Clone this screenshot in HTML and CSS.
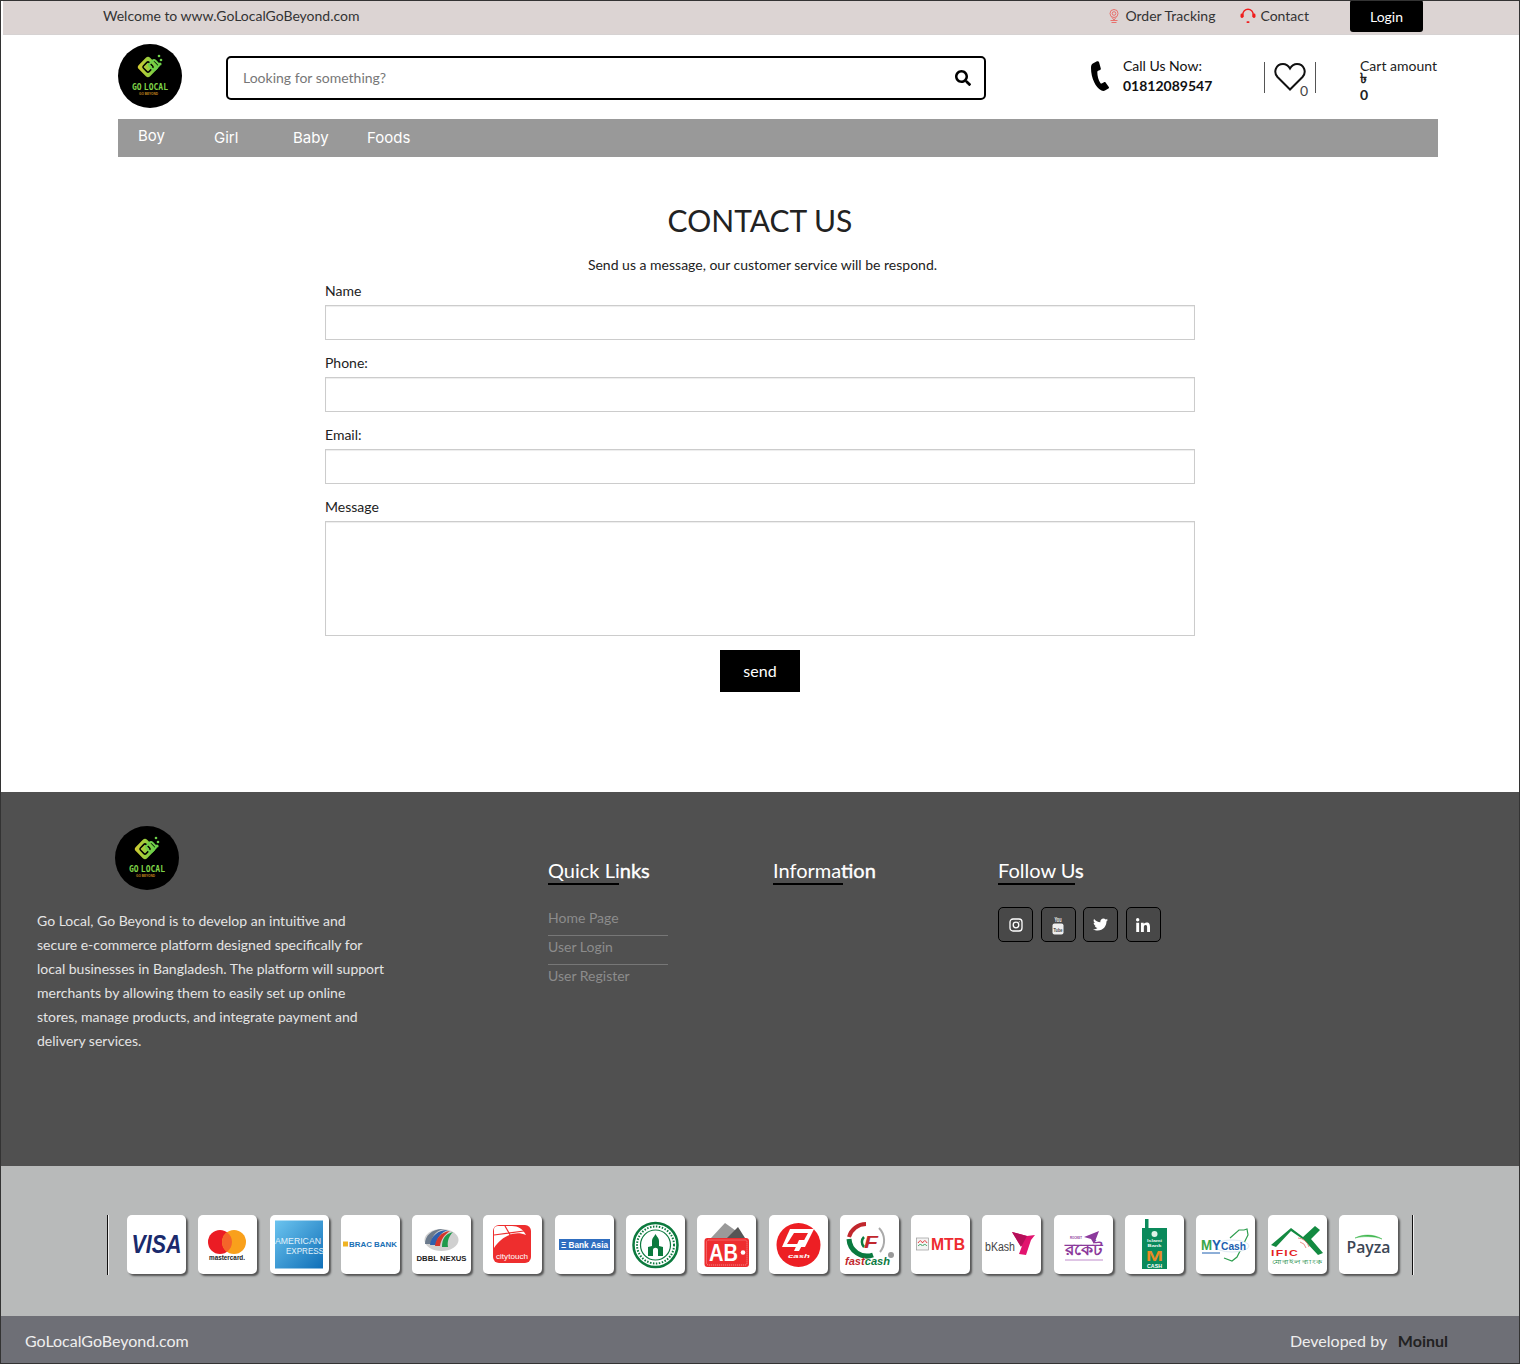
FILE: index.html
```html
<!DOCTYPE html>
<html lang="en">

<head>
    <meta charset="UTF-8">
    <meta name="viewport" content="width=device-width, initial-scale=1.0">
    <title>Contact Us</title>
    <link rel="stylesheet" href="styles.css">
</head>

<body>
    <!-- top bar -->
    <div class="topbar">
        <span class="welcome">Welcome to www.GoLocalGoBeyond.com</span>
        <a class="top-link track" href="#">
            <svg width="10" height="14" viewBox="0 0 10 14" fill="none" stroke="#e8706c" stroke-width="1">
                <circle cx="5" cy="4.500" r="4" />
                <circle cx="5" cy="4.500" r="1.800" />
                <path d="M3 8.500 5 11l2-2.500M1.500 11.500h7M2.500 13.500h5" />
            </svg>
            Order Tracking
        </a>
        <a class="top-link contact" href="#">
            <svg width="16" height="16" viewBox="0 0 16 16" fill="none">
                <path d="M2.800 9V6.500a5.200 5.200 0 0 1 10.400 0V9" stroke="#f01c1c" stroke-width="1.400" />
                <rect x="0.500" y="5.500" width="3" height="4.500" rx="1.400" fill="#f01c1c" />
                <rect x="12.500" y="5.500" width="3" height="4.500" rx="1.400" fill="#f01c1c" />
                <rect x="6.500" y="13.200" width="3" height="1.800" rx="0.800" fill="#f01c1c" />
            </svg>
            Contact
        </a>
        <a class="login" href="#">Login</a>
    </div>

    <!-- header -->
    <header class="header">
        <svg class="logo" width="64" height="64" viewBox="0 0 64 64">
            <defs>
                <linearGradient id="logoGrad" x1="0" y1="1" x2="1" y2="0">
                    <stop offset="0" stop-color="#d8c92f" />
                    <stop offset="1" stop-color="#5fd04a" />
                </linearGradient>
            </defs>
            <circle cx="32" cy="32" r="32" fill="#000" />
            <rect x="22" y="15" width="16" height="16" rx="3" transform="rotate(45 30 23)" fill="url(#logoGrad)" />
            <rect x="26" y="19" width="8" height="8" rx="1.500" transform="rotate(45 30 23)" fill="none" stroke="#000" stroke-width="1.500" />
            <rect x="32" y="17" width="8" height="8" rx="2" transform="rotate(45 36 21)" fill="none" stroke="#6ed04a" stroke-width="2" />
            <circle cx="42" cy="20" r="1.600" fill="#6ed04a" />
            <circle cx="43" cy="16" r="1.300" fill="#6ed04a" />
            <circle cx="41" cy="12" r="1.300" fill="#6ed04a" />
            <text x="14" y="46" class="logo-name" textLength="36" lengthAdjust="spacingAndGlyphs">GO LOCAL</text>
            <text x="21" y="50.500" class="logo-sub" textLength="19" lengthAdjust="spacingAndGlyphs">GO BEYOND</text>
        </svg>
        <div class="search">
            <input type="text" placeholder="Looking for something?">
            <svg width="16" height="16" viewBox="0 0 512 512" fill="#000">
                <path d="M505 442.700L405.300 343c-4.500-4.500-10.600-7-17-7H372c27.600-35.300 44-79.700 44-128C416 93.100 322.900 0 208 0S0 93.100 0 208s93.100 208 208 208c48.300 0 92.700-16.400 128-44v16.300c0 6.400 2.500 12.500 7 17l99.700 99.700c9.400 9.400 24.600 9.400 33.900 0l28.300-28.300c9.400-9.400 9.400-24.600.1-34zM208 336c-70.700 0-128-57.200-128-128 0-70.700 57.200-128 128-128 70.700 0 128 57.200 128 128 0 70.700-57.200 128-128 128z" />
            </svg>
        </div>
        <svg class="phone" width="18" height="30" viewBox="0 0 18 30" fill="#000">
            <path d="M5.500.500 1.800 2.600C.4 3.500 0 5 0 7c0 5 1.200 10 3.200 14.200 1.500 3.200 4 6.800 7.300 8.300 1.300.6 2.700.5 3.900-.2l3-1.800c.6-.4.800-1 .4-1.600l-3.200-4.400c-.4-.5-1-.6-1.600-.3l-2.300 1.200c-.5.200-1 .1-1.300-.4C7.500 19.500 6.300 15 6.300 11c0-.6.300-1 .8-1.200l2-.9c.6-.3.800-.8.700-1.400L8 1.100C7.800.3 6.300 0 5.500.5z" />
        </svg>
        <div class="call">
            <span>Call Us Now:</span>
            <b>01812089547</b>
        </div>
        <div class="wish">
            <svg width="32" height="30" viewBox="0 0 32 30" fill="none" stroke="#111" stroke-width="2">
                <path d="M16 27.500 3.500 15C-1 10 2 2 9 2c3.500 0 5.500 2 7 4.500C17.500 4 19.500 2 23 2c7 0 10 8 5.500 13z" />
            </svg>
            <span class="wish-count">0</span>
        </div>
        <div class="cart">
            <span>Cart amount</span>
            <span class="taka">৳</span>
            <b>0</b>
        </div>
    </header>

    <nav class="nav">
        <a class="boy" href="#">Boy</a>
        <a href="#">Girl</a>
        <a href="#">Baby</a>
        <a href="#">Foods</a>
    </nav>

    <!-- contact form -->
    <main class="main">
        <h1>CONTACT US</h1>
        <p class="lead">Send us a message, our customer service will be respond.</p>
        <form class="form">
            <label>Name</label>
            <input type="text">
            <label>Phone:</label>
            <input type="text">
            <label>Email:</label>
            <input type="text">
            <label>Message</label>
            <textarea></textarea>
            <button type="button">send</button>
        </form>
    </main>

    <!-- footer -->
    <footer class="footer">
        <div class="about">
            <svg class="foot-logo" width="64" height="64" viewBox="0 0 64 64">
                <circle cx="32" cy="32" r="32" fill="#000" />
                <rect x="22" y="15" width="16" height="16" rx="3" transform="rotate(45 30 23)" fill="url(#logoGrad)" />
                <rect x="26" y="19" width="8" height="8" rx="1.500" transform="rotate(45 30 23)" fill="none" stroke="#000" stroke-width="1.500" />
                <rect x="32" y="17" width="8" height="8" rx="2" transform="rotate(45 36 21)" fill="none" stroke="#6ed04a" stroke-width="2" />
                <circle cx="42" cy="20" r="1.600" fill="#6ed04a" />
                <circle cx="43" cy="16" r="1.300" fill="#6ed04a" />
                <circle cx="41" cy="12" r="1.300" fill="#6ed04a" />
                <text x="14" y="46" class="logo-name" textLength="36" lengthAdjust="spacingAndGlyphs">GO LOCAL</text>
                <text x="21" y="50.500" class="logo-sub" textLength="19" lengthAdjust="spacingAndGlyphs">GO BEYOND</text>
            </svg>
            <p>Go Local, Go Beyond is to develop an intuitive and secure e-commerce platform designed specifically for local businesses in Bangladesh. The platform will support merchants by allowing them to easily set up online stores, manage products, and integrate payment and delivery services.</p>
        </div>
        <div class="foot-col">
            <h4 class="u-quick">Quick Li<span>nks</span></h4>
            <ul>
                <li><a href="#">Home Page</a></li>
                <li><a href="#">User Login</a></li>
                <li><a href="#">User Register</a></li>
            </ul>
        </div>
        <div class="foot-col">
            <h4 class="u-info">Informa<span>tion</span></h4>
        </div>
        <div class="foot-col">
            <h4 class="u-follow">Follow U<span>s</span></h4>
            <div class="social">
                <a href="#">
                    <svg width="14" height="14" viewBox="0 0 14 14" fill="none" stroke="#fff" stroke-width="1.300">
                        <rect x="1" y="1" width="12" height="12" rx="3" />
                        <circle cx="7" cy="7" r="2.800" />
                        <circle cx="10.300" cy="3.700" r="0.500" fill="#fff" stroke="none" />
                    </svg>
                </a>
                <a href="#">
                    <svg class="yt" width="14" height="20" viewBox="0 0 14 20">
                        <text x="7" y="7" class="yt-you" textLength="7" lengthAdjust="spacingAndGlyphs">You</text>
                        <rect x="1.500" y="8.500" width="11" height="11" rx="2" fill="#eee" />
                        <text x="7" y="17" class="yt-tube" textLength="9" lengthAdjust="spacingAndGlyphs">Tube</text>
                    </svg>
                </a>
                <a href="#">
                    <svg width="15" height="15" viewBox="0 0 512 512" fill="#fff">
                        <path d="M459.370 151.716c.325 4.548.325 9.097.325 13.645 0 138.720-105.583 298.558-298.558 298.558-59.452 0-114.680-17.219-161.137-47.106 8.447.974 16.568 1.299 25.340 1.299 49.055 0 94.213-16.568 130.274-44.832-46.132-.975-84.792-31.188-98.112-72.772 6.498.974 12.995 1.624 19.818 1.624 9.421 0 18.843-1.300 27.614-3.573-48.081-9.747-84.143-51.980-84.143-102.985v-1.299c13.969 7.797 30.214 12.670 47.431 13.319-28.264-18.843-46.781-51.005-46.781-87.391 0-19.492 5.197-37.360 14.294-52.954 51.655 63.675 129.300 105.258 216.365 109.807-1.624-7.797-2.599-15.918-2.599-24.040 0-57.828 46.782-104.934 104.934-104.934 30.213 0 57.502 12.670 76.670 33.137 23.715-4.548 46.456-13.320 66.599-25.340-7.798 24.366-24.366 44.833-46.132 57.827 21.117-2.273 41.584-8.122 60.426-16.243-14.292 20.791-32.161 39.308-52.628 54.253z" />
                    </svg>
                </a>
                <a href="#">
                    <svg width="14" height="14" viewBox="0 0 448 448" fill="#fff">
                        <path d="M100.280 448H7.400V148.900h92.880zM53.790 108.100C24.090 108.100 0 83.500 0 53.800a53.790 53.790 0 0 1 107.580 0c0 29.700-24.100 54.300-53.790 54.300zM447.900 448h-92.680V302.400c0-34.700-.7-79.200-48.290-79.200-48.290 0-55.690 37.700-55.690 76.700V448h-92.780V148.900h89.080v40.800h1.300c12.400-23.500 42.690-48.300 87.880-48.300 94 0 111.280 61.900 111.280 142.300V448z" />
                    </svg>
                </a>
            </div>
        </div>
    </footer>

    <!-- payment methods -->
    <section class="pay">
        <div class="pay-row">
            <div class="card"><svg viewBox="0 0 59 59">
                <text x="29.500" y="38" class="t-visa" textLength="50" lengthAdjust="spacingAndGlyphs">VISA</text>
            </svg></div>
            <div class="card"><svg viewBox="0 0 59 59">
                <circle cx="22" cy="27" r="12" fill="#eb1c24" />
                <circle cx="36" cy="27" r="12" fill="#f9a01b" />
                <path d="M29 17.250A12 12 0 0 1 29 36.750 12 12 0 0 1 29 17.250z" fill="#f4652a" />
                <text x="29" y="44.500" class="t-mc" textLength="36" lengthAdjust="spacingAndGlyphs">mastercard.</text>
            </svg></div>
            <div class="card"><svg viewBox="0 0 59 59">
                <defs><linearGradient id="amex" x1="0" y1="0" x2="1" y2="1"><stop offset="0" stop-color="#6cc4ef" /><stop offset="1" stop-color="#0f6fb8" /></linearGradient></defs>
                <rect x="5" y="5.500" width="48" height="48" fill="url(#amex)" />
                <text x="5" y="29" class="t-amex" textLength="46" lengthAdjust="spacingAndGlyphs">AMERICAN</text>
                <text x="16" y="39" class="t-amex" textLength="38" lengthAdjust="spacingAndGlyphs">EXPRESS</text>
            </svg></div>
            <div class="card"><svg viewBox="0 0 59 59">
                <rect x="2" y="26.500" width="5" height="5" fill="#f0b323" />
                <text x="8" y="32" class="t-brac" textLength="48" lengthAdjust="spacingAndGlyphs">BRAC BANK</text>
            </svg></div>
            <div class="card"><svg viewBox="0 0 59 59">
                <ellipse cx="29.500" cy="25" rx="17" ry="11" fill="#d0d0d0" />
                <path d="M13 29c0-9 8-16 20-15-8 1-13 6-14 15z" fill="#6b7a8c" />
                <path d="M18 30c1-9 8-15 18-15-6 2-11 7-12 15z" fill="#2f5fae" />
                <path d="M23 31c1-8 6-14 15-15-5 3-9 8-10 15z" fill="#d4352b" />
                <path d="M30 32c0-8 3-13 11-15-4 4-6 9-5 15z" fill="#1f9a4b" />
                <text x="29.500" y="46" class="t-dbbl" textLength="50" lengthAdjust="spacingAndGlyphs">DBBL NEXUS</text>
            </svg></div>
            <div class="card"><svg viewBox="0 0 59 59">
                <rect x="10" y="10" width="38" height="38" rx="6" fill="#ee2e2e" />
                <path d="M11 33V14c0-2 2-3 4-3h14c6 0 11 3 14 9-12-5-25 2-32 13z" fill="#fff" />
                <path d="M22 11l8 14M11 20l30-4" stroke="#ee2e2e" stroke-width="1.200" fill="none" />
                <text x="29" y="44" class="t-city" textLength="32" lengthAdjust="spacingAndGlyphs">citytouch</text>
            </svg></div>
            <div class="card"><svg viewBox="0 0 59 59">
                <rect x="4" y="24" width="51" height="11" fill="#2f6ec0" />
                <text x="29.500" y="32.500" class="t-asia" textLength="47" lengthAdjust="spacingAndGlyphs">Ξ Bank Asia</text>
            </svg></div>
            <div class="card"><svg viewBox="0 0 59 59">
                <circle cx="29.500" cy="30" r="22" fill="#fff" stroke="#0c7a3e" stroke-width="2.500" />
                <circle cx="29.500" cy="30" r="15" fill="#fff" stroke="#0c7a3e" stroke-width="1.200" />
                <circle cx="29.500" cy="30" r="18.500" fill="none" stroke="#0c7a3e" stroke-width="2" stroke-dasharray="1.500 1.500" />
                <path d="M22 41V32l4-1v-5c0-3 2-4 3.500-7 1.500 3 3.500 4 3.500 7v5l4 1v9z" fill="#0c7a3e" />
                <path d="M27 41v-6c0-3 5-3 5 0v6z" fill="#fff" />
            </svg></div>
            <div class="card"><svg viewBox="0 0 59 59">
                <path d="M14 23 28 8l14 10 5 5z" fill="#9a9a9a" />
                <path d="M30 23 41 12l7 11z" fill="#555" />
                <rect x="7.500" y="23" width="44.500" height="29" rx="3" fill="#ee2d2f" />
                <rect x="9.500" y="25" width="40.500" height="25" rx="2" fill="none" stroke="#fff" stroke-width="0.500" stroke-dasharray="1 1" />
                <text x="12" y="46" class="t-ab" textLength="29" lengthAdjust="spacingAndGlyphs">AB</text>
                <circle cx="46" cy="37.500" r="2.300" fill="#fff" />
            </svg></div>
            <div class="card"><svg viewBox="0 0 59 59">
                <circle cx="29.500" cy="30" r="22" fill="#ed1f24" />
                <path d="M21 14h24l-9 18H13z" fill="#fff" />
                <path d="M25 18h14l-6 11H18z" fill="#ed1f24" />
                <path d="M20 29h9l-3 3H17zM30 25h6l-6 11h-5z" fill="#fff" />
                <text x="30" y="43" class="t-q" textLength="22" lengthAdjust="spacingAndGlyphs">cash</text>
            </svg></div>
            <div class="card"><svg viewBox="0 0 59 59">
                <path d="M9 22a18 18 0 0 1 17-13" fill="none" stroke="#c1272d" stroke-width="4" />
                <path d="M9 24a18 18 0 0 0 24 16" fill="none" stroke="#0a7a3f" stroke-width="5" />
                <path d="M39 13a18 18 0 0 1 1 24" fill="none" stroke="#aaa" stroke-width="2" />
                <path d="M24 22a7 7 0 0 0 0 10" fill="none" stroke="#0a7a3f" stroke-width="2.500" />
                <text x="24" y="33" class="t-fc-f" textLength="14" lengthAdjust="spacingAndGlyphs">F</text>
                <text x="5" y="50" class="t-fc" textLength="45" lengthAdjust="spacingAndGlyphs"><tspan fill="#c1272d">fast</tspan><tspan fill="#0a7a3f">cash</tspan></text>
                <circle cx="51" cy="40" r="3" fill="#999" />
            </svg></div>
            <div class="card"><svg viewBox="0 0 59 59">
                <rect x="5.500" y="23" width="12" height="12" fill="#f4f4f4" stroke="#999" stroke-width="0.700" />
                <path d="M7 28c2-3 3-3 4.500 0 1.500-3 3-3 4.500 0" fill="none" stroke="#e8383c" stroke-width="1" />
                <path d="M7 31c2-2 3-2 4.500 0 1.500-2 3-2 4.500 0" fill="none" stroke="#2f9e5a" stroke-width="1" />
                <text x="20" y="35" class="t-mtb" textLength="34" lengthAdjust="spacingAndGlyphs">MTB</text>
            </svg></div>
            <div class="card"><svg viewBox="0 0 59 59">
                <text x="3" y="36" class="t-bkash" textLength="30" lengthAdjust="spacingAndGlyphs">bKash</text>
                <path d="M30 17 45 21l8-1-4 5-5 15-7-1 3-8-2-1z" fill="#e2136e" />
                <path d="M30 17 45 21l-6 11z" fill="#b50f59" />
            </svg></div>
            <div class="card"><svg viewBox="0 0 59 59">
                <text x="22" y="24" class="t-rocket-s" textLength="12" lengthAdjust="spacingAndGlyphs">ROCKET</text>
                <path d="M30 22 45 16l-5 13-3-5z" fill="#8c3a9c" />
                <text x="29.500" y="40" class="t-rocket" textLength="38" lengthAdjust="spacingAndGlyphs">রকেট</text>
                <path d="M11 45h38" stroke="#c08ccb" stroke-width="1" />
            </svg></div>
            <div class="card"><svg viewBox="0 0 59 59">
                <rect x="20" y="4" width="3.500" height="10" fill="#0a8a5b" />
                <rect x="17" y="13" width="25" height="41" fill="#0a8a5b" />
                <circle cx="29.500" cy="19" r="3" fill="#dff2e8" />
                <text x="29.500" y="27" class="t-mc-s" textLength="15" lengthAdjust="spacingAndGlyphs">Islami</text>
                <text x="29.500" y="31.500" class="t-mc-s" textLength="14" lengthAdjust="spacingAndGlyphs">Bank</text>
                <text x="29.500" y="46" class="t-mc-m" textLength="17" lengthAdjust="spacingAndGlyphs">M</text>
                <text x="29.500" y="52.500" class="t-mc-c" textLength="15" lengthAdjust="spacingAndGlyphs">CASH</text>
            </svg></div>
            <div class="card"><svg viewBox="0 0 59 59">
                <path d="M34 23 43 15h5l3-1 1 6-11 22-5 4-8-3" fill="#fff" stroke="#2e9e4f" stroke-width="1.200" />
                <ellipse cx="36" cy="31" rx="17" ry="6" fill="#fff" stroke="#c6d6e8" stroke-width="0.600" />
                <text x="5" y="35" class="t-my" textLength="20" lengthAdjust="spacingAndGlyphs"><tspan fill="#3aa648">M</tspan><tspan fill="#1d5fb0">Y</tspan></text>
                <text x="25" y="35" class="t-cash" textLength="25" lengthAdjust="spacingAndGlyphs">Cash</text>
                <path d="M6 38h18" stroke="#1d5fb0" stroke-width="1" />
            </svg></div>
            <div class="card"><svg viewBox="0 0 59 59">
                <path d="M3 30 23 13l12 9 12-11 5 4-9 9 12 14-5 2-14-15-13-9L8 32z" fill="#138a41" />
                <path d="M30 23a12 12 0 0 1 11 9M32 27a8 8 0 0 1 6 6" fill="none" stroke="#e8746c" stroke-width="0.800" />
                <text x="3" y="41" class="t-ific" textLength="28" lengthAdjust="spacingAndGlyphs">IFIC</text>
                <text x="29" y="49" class="t-ific-s" textLength="50" lengthAdjust="spacingAndGlyphs">মোবাইল ব্যাংক</text>
            </svg></div>
            <div class="card"><svg viewBox="0 0 59 59">
                <path d="M16 23c8-4 19-4 27 1-8-3-19-3-27-1z" fill="#3bb54a" stroke="#3bb54a" stroke-width="0.500" />
                <text x="29.500" y="38" class="t-payza" textLength="44" lengthAdjust="spacingAndGlyphs">Payza</text>
            </svg></div>
        </div>
    </section>

    <div class="bottom">
        <span>GoLocalGoBeyond.com</span>
        <span class="dev">Developed by <b>Moinul</b></span>
    </div>
</body>

</html>
```

FILE: styles.css
```css
* {
    box-sizing: border-box;
}

body {
    margin: 0;
    width: 1520px;
    height: 1364px;
    border: 1px solid #333;
    font-family: "Lato", "Noto Sans", sans-serif;
    font-size: 14px;
    color: #222;
    background-color: #fff;
    overflow: hidden;
}

a {
    color: inherit;
    text-decoration: none;
}

.logo-name {
    font-family: "DejaVu Sans Mono", monospace;
    font-weight: bold;
    font-size: 9px;
    word-spacing: -3px;
    fill: #7ed348;
}

.logo-sub {
    font-family: "Liberation Sans", sans-serif;
    font-weight: bold;
    font-size: 3px;
    fill: #c78a1e;
}

/* top bar */
.topbar {
    display: flex;
    align-items: flex-start;
    height: 34px;
    margin-left: 2px;
    background-color: #dcd4d3;
    border-bottom: 1px solid #d6d2d2;
    line-height: 30px;
    color: #333;
}

.welcome {
    margin-left: 100px;
    margin-right: auto;
}

.top-link {
    display: flex;
    align-items: center;
    height: 30px;
}

.track {
    gap: 6px;
}

.contact {
    gap: 4px;
    margin-left: 25px;
}

.login {
    width: 73px;
    height: 32px;
    margin-left: 41px;
    margin-right: 96px;
    margin-top: -1px;
    padding-top: 2px;
    text-align: center;
    color: #fff;
    background-color: #000;
    border-radius: 3px;
}

/* header */
.header {
    display: flex;
    align-items: center;
    height: 84px;
    padding-left: 117px;
}

.logo {
    margin-top: -2px;
}

.search {
    display: flex;
    align-items: center;
    width: 760px;
    height: 44px;
    margin-left: 44px;
    margin-top: 2px;
    padding: 0 13px 0 15px;
    border: 2px solid #000;
    border-radius: 5px;
}

.search input {
    flex: 1;
    margin-bottom: 2px;
    padding: 0;
    border: 0;
    outline: 0;
    font-family: "Lato", sans-serif;
    font-size: 14px;
}

.search input::placeholder {
    color: #777;
}

.phone {
    margin-left: 105px;
    margin-top: -3px;
}

.call {
    display: flex;
    flex-direction: column;
    width: 141px;
    margin-left: 14px;
    margin-top: -2px;
    line-height: 20px;
    color: #111;
}

.wish {
    position: relative;
    width: 52px;
    height: 31px;
    padding-left: 9px;
    border-left: 1px solid #555;
    border-right: 1px solid #555;
}

.wish-count {
    position: absolute;
    right: 7px;
    bottom: -6px;
    color: #444;
}

.cart {
    display: flex;
    flex-direction: column;
    margin-left: 44px;
    margin-top: 9px;
    line-height: 12px;
}

.cart b {
    margin-top: 3px;
    line-height: 16px;
}

.taka {
    font-weight: bold;
}

/* nav */
.nav {
    display: grid;
    grid-template-columns: 76px 79px 74px auto;
    align-items: center;
    width: 1320px;
    height: 38px;
    margin-left: 117px;
    padding: 0 0 2px 20px;
    font-family: "Inter", sans-serif;
    font-size: 15px;
    color: #fff;
    background-color: #999;
}

.nav .boy {
    margin-top: -4px;
}

/* contact form */
.main {
    height: 635px;
    padding-top: 44px;
    text-align: center;
}

.main h1 {
    margin: 0;
    height: 38px;
    font-size: 30px;
    font-weight: 400;
    line-height: 38px;
    color: #222;
}

.lead {
    margin: 16px 0 0;
    padding-left: 5px;
    line-height: 20px;
    color: #222;
}

.form {
    display: flex;
    flex-direction: column;
    width: 870px;
    margin: 0 auto;
    text-align: left;
}

.form label {
    height: 20px;
    margin-top: 6px;
    margin-bottom: 4px;
    line-height: 20px;
}

.form input,
.form textarea {
    display: block;
    width: 100%;
    height: 35px;
    margin-bottom: 7px;
    border: 1px solid #ccc;
    box-shadow: inset 0 1px 1px rgba(0, 0, 0, .075);
    background-color: #fff;
    outline: 0;
}

.form textarea {
    height: 115px;
    margin-bottom: 14px;
    resize: none;
}

.form button {
    align-self: center;
    width: 80px;
    height: 42px;
    padding: 0 0 2px;
    border: 0;
    font-family: "Lato", sans-serif;
    font-size: 16px;
    color: #fff;
    background-color: #000;
}

/* footer */
.footer {
    display: flex;
    height: 374px;
    background-color: #505050;
    color: #fff;
}

.about {
    width: 547px;
    padding: 34px 0 0 36px;
}

.foot-logo {
    display: block;
    margin-left: 78px;
}

.about p {
    width: 352px;
    margin: 19px 0 0;
    line-height: 24px;
    color: #e4e4e4;
}

.foot-col {
    width: 225px;
    padding-top: 66px;
}

.foot-col h4 {
    position: relative;
    margin: 0;
    height: 26px;
    font-size: 20px;
    font-weight: 400;
    line-height: 25px;
}

.foot-col h4 span {
    -webkit-text-stroke: 0.400px #fff;
}

.foot-col h4::after {
    content: "";
    position: absolute;
    left: 0;
    bottom: -1px;
    height: 2px;
    background-color: #000;
}

.u-quick::after {
    width: 71px;
}

.u-info::after {
    width: 70px;
}

.u-follow::after {
    width: 77px;
}

.foot-col ul {
    width: 120px;
    margin: 23px 0 0;
    padding: 0;
    list-style: none;
}

.foot-col li {
    height: 29px;
    line-height: 22px;
    color: #8c8c8c;
    border-bottom: 1px solid #777;
}

.foot-col li:last-child {
    border-bottom: 0;
}

.social {
    display: flex;
    gap: 7.670px;
    margin-top: 23px;
}

.social a {
    display: flex;
    align-items: center;
    justify-content: center;
    width: 35px;
    height: 35px;
    border: 1px solid #000;
    border-radius: 5px;
    background-color: #484848;
}

.yt {
    overflow: visible;
}

.yt-you,
.yt-tube {
    font-family: "Liberation Sans", sans-serif;
    font-weight: bold;
    text-anchor: middle;
}

.yt-you {
    font-size: 7px;
    fill: #eee;
}

.yt-tube {
    font-size: 6px;
    fill: #484848;
}

/* payment methods */
.pay {
    height: 150px;
    padding: 49px 0 0 106px;
    background-color: #b8baba;
}

.pay-row {
    display: flex;
    justify-content: space-between;
    width: 1306px;
    height: 60px;
    padding: 0 14px 0 19px;
    border-left: 1px solid #111;
    border-right: 1px solid #111;
    box-shadow: inset 1px 0 0 #eee, 1px 0 0 #eee;
}

.card {
    width: 59px;
    height: 59px;
    background-color: #fff;
    border-radius: 5px;
    box-shadow: 2px 2px 2px #555;
}

.card svg {
    display: block;
    width: 59px;
    height: 59px;
}

.card text {
    font-family: "Liberation Sans", sans-serif;
    font-weight: bold;
}

.card .t-visa {
    font-size: 25px;
    font-style: italic;
    text-anchor: middle;
    fill: #1a2a6c;
}

.card .t-mc {
    font-size: 6.500px;
    text-anchor: middle;
    fill: #222;
}

.card .t-amex {
    font-size: 9px;
    font-weight: normal;
    fill: #e2f2fb;
}

.card .t-brac {
    font-size: 7.500px;
    fill: #1a6fb5;
}

.card .t-dbbl {
    font-size: 7px;
    text-anchor: middle;
    fill: #222;
}

.card .t-city {
    font-size: 8px;
    font-weight: normal;
    text-anchor: middle;
    fill: #fff;
}

.card .t-asia {
    font-size: 8.500px;
    text-anchor: middle;
    fill: #fff;
}

.card .t-ab {
    font-size: 23px;
    fill: #fff;
}

.card .t-q {
    font-size: 6px;
    font-style: italic;
    text-anchor: middle;
    fill: #fff;
}

.card .t-fc-f {
    font-size: 17px;
    font-style: italic;
    fill: #c1272d;
}

.card .t-fc {
    font-size: 11.500px;
    font-style: italic;
}

.card .t-mtb {
    font-size: 16px;
    fill: #ee2b30;
}

.card .t-bkash {
    font-size: 12.500px;
    font-weight: normal;
    fill: #444;
}

.card .t-rocket-s {
    font-size: 3.500px;
    text-anchor: middle;
    fill: #8c3a9c;
}

.card .t-rocket {
    font-size: 16px;
    text-anchor: middle;
    fill: #8c3a9c;
}

.card .t-mc-s {
    font-size: 4px;
    text-anchor: middle;
    fill: #eaf6f0;
}

.card .t-mc-m {
    font-size: 15px;
    text-anchor: middle;
    fill: #e98a24;
}

.card .t-mc-c {
    font-size: 5px;
    text-anchor: middle;
    fill: #fff;
}

.card .t-my {
    font-size: 14px;
}

.card .t-cash {
    font-size: 10.500px;
    fill: #1d5fb0;
}

.card .t-ific {
    font-size: 9.500px;
    letter-spacing: 1px;
    fill: #e41f26;
}

.card .t-ific-s {
    font-family: "Noto Sans", sans-serif;
    font-size: 6px;
    font-weight: normal;
    text-anchor: middle;
    fill: #138a41;
}

.card .t-payza {
    font-family: "Open Sans", sans-serif;
    font-size: 15.500px;
    font-weight: 600;
    text-anchor: middle;
    fill: #3c4654;
}

/* bottom bar */
.bottom {
    display: flex;
    justify-content: space-between;
    height: 47px;
    padding: 0 71px 0 24px;
    line-height: 50px;
    font-size: 16px;
    color: #eee;
    background-color: #6e6f76;
}

.dev b {
    margin-left: 7px;
    color: #222;
}
```
